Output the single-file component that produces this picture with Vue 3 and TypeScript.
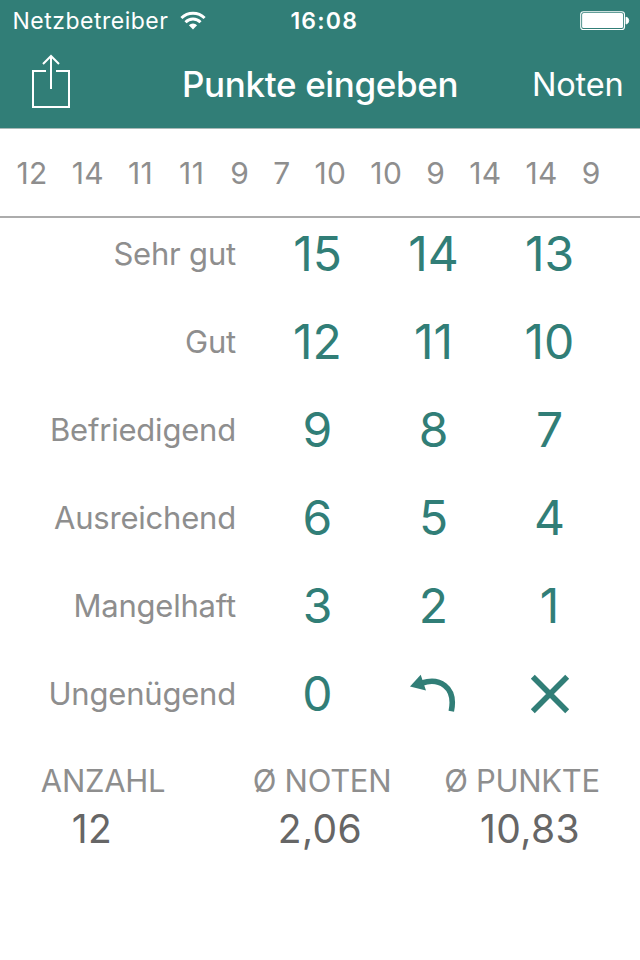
<script setup lang="ts">
interface GradeRow {
  label: string
  keys: string[]
}

interface Stat {
  name: string
  label: string
  value: string
}

const history: number[] = [12, 14, 11, 11, 9, 7, 10, 10, 9, 14, 14, 9]

const rows: GradeRow[] = [
  { label: 'Sehr gut', keys: ['15', '14', '13'] },
  { label: 'Gut', keys: ['12', '11', '10'] },
  { label: 'Befriedigend', keys: ['9', '8', '7'] },
  { label: 'Ausreichend', keys: ['6', '5', '4'] },
  { label: 'Mangelhaft', keys: ['3', '2', '1'] },
  { label: 'Ungenügend', keys: ['0', 'undo', 'clear'] },
]

const stats: Stat[] = [
  { name: 'count', label: 'ANZAHL', value: '12' },
  { name: 'grade', label: 'Ø NOTEN', value: '2,06' },
  { name: 'points', label: 'Ø PUNKTE', value: '10,83' },
]
</script>

<template>
  <div class="screen">
    <header class="top">
      <div class="status">
        <div class="carrier">
          <span class="carrier-name">Netzbetreiber</span>
          <svg class="wifi" width="26" height="20" viewBox="0 0 26 20">
            <g fill="none" stroke="#fff" stroke-width="2.9">
              <path d="M1.4 7.1a16.2 16.2 0 0 1 23.2 0" />
              <path d="M5.5 11.2a10.4 10.4 0 0 1 15 0" />
            </g>
            <path d="M13 18.6l-4.1-4.3a5.8 5.8 0 0 1 8.2 0z" fill="#fff" />
          </svg>
        </div>
        <div class="clock">16:08</div>
        <svg class="battery" width="50" height="20" viewBox="0 0 50 20">
          <rect x="0.7" y="0.7" width="43.8" height="17.8" rx="2.8" fill="none" stroke="#fff" stroke-width="1.1" />
          <rect x="2.1" y="2.1" width="41" height="15" rx="1.6" fill="#fff" />
          <path d="M46 6.1a3.6 3.6 0 0 1 0 7z" fill="#fff" stroke="#fff" stroke-width="0.8" />
        </svg>
      </div>
      <div class="nav">
        <button class="share" type="button">
          <svg width="40" height="56" viewBox="0 0 40 56" fill="none" stroke="#fff" stroke-width="2">
            <path d="M14 17H1v36h36V17H24" />
            <path d="M19 2v33M11 10l8-8 8 8" />
          </svg>
        </button>
        <h1 class="title">Punkte eingeben</h1>
        <button class="action" type="button">Noten</button>
      </div>
    </header>

    <div class="history">
      <span v-for="(points, i) in history" :key="i" :class="{ ones: points === 11 }">{{ points }}</span>
    </div>

    <main class="pad">
      <div v-for="row in rows" :key="row.label" class="row">
        <span class="label">{{ row.label }}</span>
        <button v-for="key in row.keys" :key="key" class="key" type="button">
          <svg v-if="key === 'undo'" class="key-icon" width="48" height="40" viewBox="0 0 48 40">
            <path d="M0 12.5L10.7 0.8l5.3 15.6z" fill="#317e77" />
            <path d="M12 9C28.5 3.5 46.5 12 41.3 37.2" fill="none" stroke="#317e77" stroke-width="5.6" />
          </svg>
          <svg v-else-if="key === 'clear'" class="key-icon" width="40" height="40" viewBox="0 0 40 40">
            <path d="M2.8 2.8l34.4 34.4M37.2 2.8L2.8 37.2" stroke="#317e77" stroke-width="5.6" />
          </svg>
          <template v-else>{{ key }}</template>
        </button>
      </div>
    </main>

    <footer class="stats">
      <div v-for="stat in stats" :key="stat.name" class="stat" :class="stat.name">
        <span class="stat-label">{{ stat.label }}</span>
        <span class="stat-value">{{ stat.value }}</span>
      </div>
    </footer>
  </div>
</template>

<style>
body {
  margin: 0;
  background: #fff;
}
</style>

<style scoped>
.screen {
  width: 640px;
  height: 960px;
  overflow: hidden;
  background: #fff;
  font-family: Inter, 'Liberation Sans', sans-serif;
  color: #8e8e8e;
}
button {
  padding: 0;
  border: 0;
  background: none;
  font: inherit;
  color: inherit;
}
svg {
  display: block;
}
.top {
  box-sizing: border-box;
  height: 129px;
  background: #317e77;
  border-bottom: 1px solid #a9b9b7;
  color: #fff;
}
.status {
  box-sizing: border-box;
  display: grid;
  grid-template-columns: 1fr auto 1fr;
  align-items: center;
  height: 40px;
  padding: 2px 10px 0 12.5px;
  font-size: 23px;
}
.carrier {
  display: flex;
  align-items: center;
  gap: 11.5px;
  letter-spacing: 0.5px;
}
.clock {
  padding-left: 6px;
  font-weight: 600;
  letter-spacing: 1.2px;
}
.battery {
  justify-self: end;
}
.nav {
  display: grid;
  grid-template-columns: 150px 1fr 150px;
  align-items: center;
  height: 88px;
  padding: 0 16px 0 32px;
}
.share {
  justify-self: start;
  padding-bottom: 4px;
}
.title {
  margin: 0 16px 0 0;
  text-align: center;
  font-size: 35px;
  font-weight: 500;
  letter-spacing: -0.35px;
  white-space: nowrap;
}
.action {
  justify-self: end;
  padding-right: 0.8px;
  font-size: 32.5px;
  letter-spacing: -0.2px;
}
.history {
  box-sizing: border-box;
  display: flex;
  align-items: center;
  gap: 24px;
  height: 89px;
  padding: 1px 0 0 16.5px;
  border-bottom: 2px solid #acacac;
  font-size: 30px;
  letter-spacing: 0.35px;
}
.history .ones {
  padding-right: 2px;
}
.pad {
  margin-top: -9px;
}
.row {
  display: grid;
  grid-template-columns: 236px 23.5px 116px 116px 116px;
  align-items: center;
  height: 88px;
}
.row .key:nth-child(2) {
  grid-column: 3;
}
.label {
  text-align: right;
  font-size: 31px;
  letter-spacing: -0.2px;
}
.key {
  display: flex;
  align-items: center;
  justify-content: center;
  color: #317e77;
  font-size: 48px;
}
.key-icon {
  margin-top: 2px;
}
.stats {
  display: grid;
  grid-template-columns: 206px 232px 168px;
  margin-top: 22px;
}
.stat {
  display: flex;
  flex-direction: column;
  align-items: center;
}
.stat-label {
  font-size: 31px;
  line-height: 44px;
  letter-spacing: -0.3px;
  white-space: nowrap;
}
.stat-value {
  font-size: 39px;
  line-height: 52px;
  letter-spacing: 0.4px;
  color: #666;
}
.count .stat-value {
  margin-right: 22px;
}
.grade .stat-value {
  margin-right: 4px;
}
.points .stat-value {
  margin-left: 16px;
}
</style>
